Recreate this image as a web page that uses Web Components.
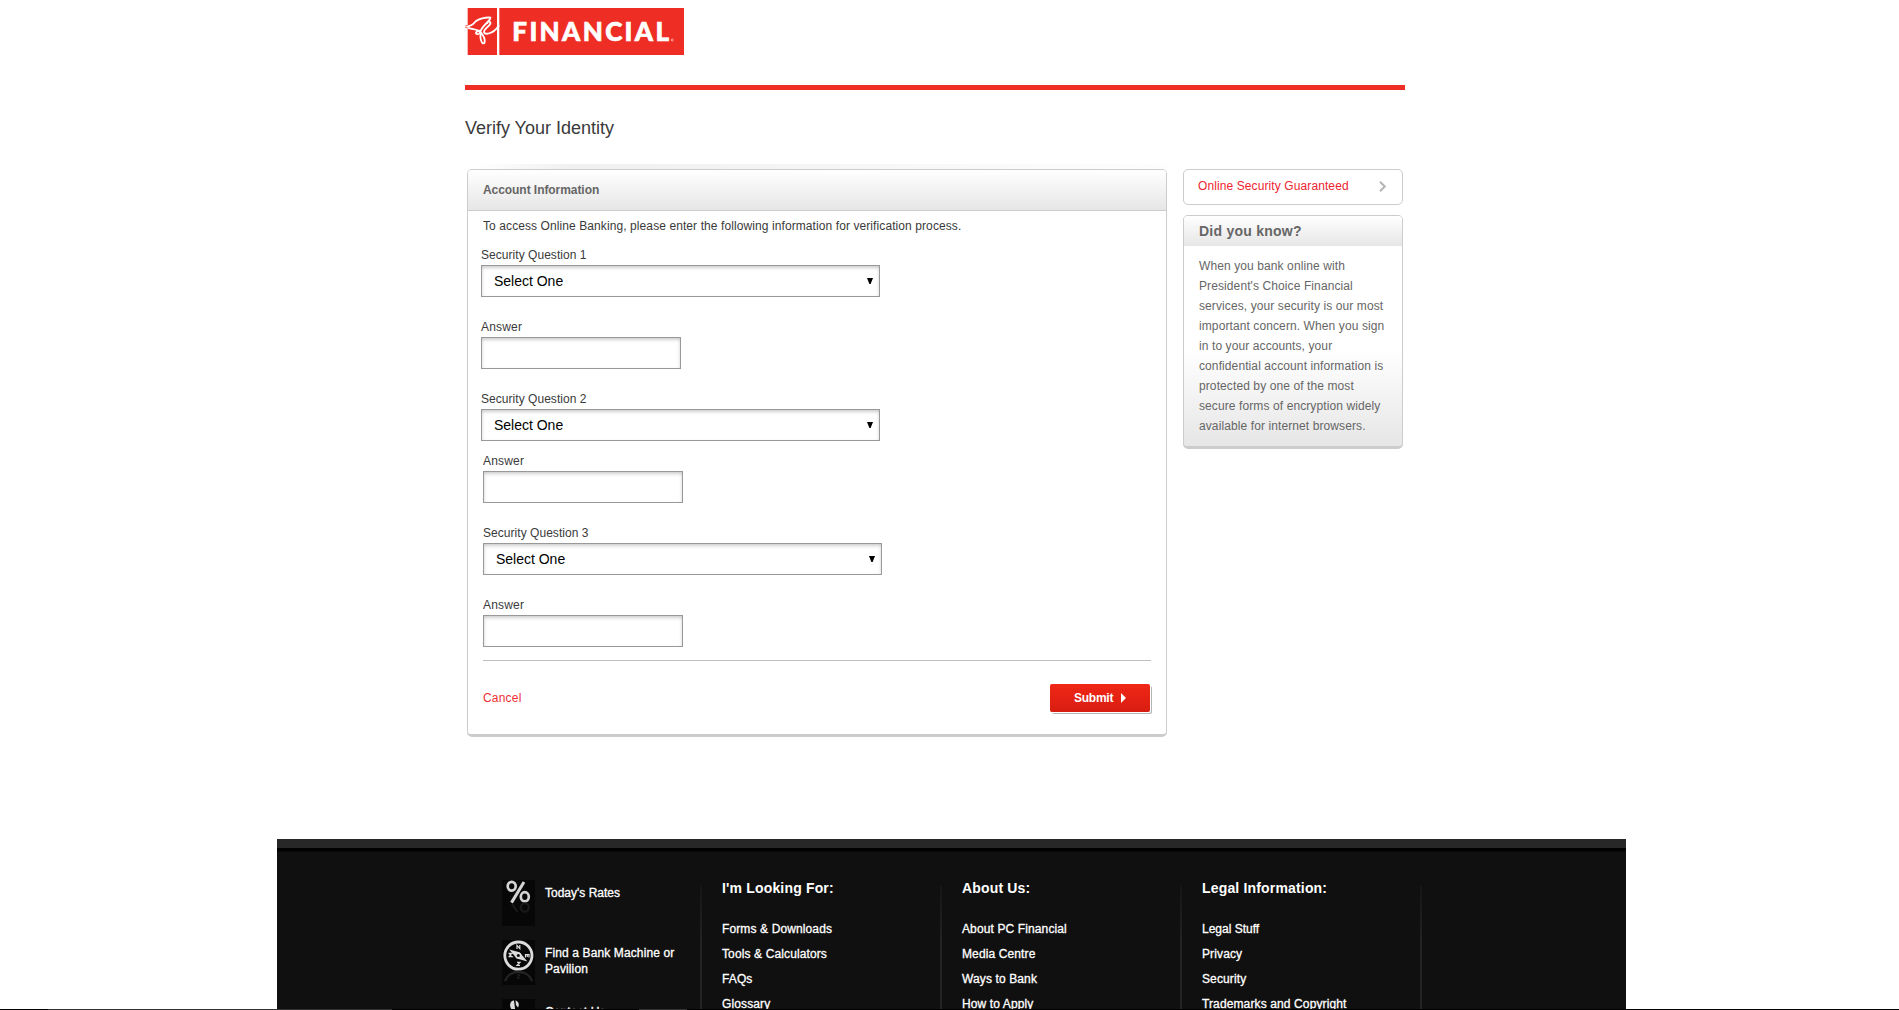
<!DOCTYPE html>
<html lang="en">
<head>
<meta charset="utf-8">
<title>Verify Your Identity</title>
<style>
html,body{margin:0;height:1010px;overflow:hidden;background:#fff}
body{font:12px/14px "Liberation Sans",Arial,sans-serif;color:#3a3a3a;letter-spacing:.1px}
</style>
</head>
<body>
<bank-page></bank-page>
<script>
function define(name, html) {
  const t = document.createElement('template');
  t.innerHTML = html;
  customElements.define(name, class extends HTMLElement {
    constructor() {
      super();
      this.attachShadow({ mode: 'open' }).appendChild(t.content.cloneNode(true));
    }
  });
}

define('brand-header', `
<style>
:host{display:block;padding-top:8px;border-bottom:5px solid #ee2e24;height:77px}
svg{display:block}
text{font:900 78px Lato,sans-serif;letter-spacing:0}
</style>
<svg width="220" height="47" viewBox="30 24 660 141">
  <rect x="38" y="24" width="88" height="141" fill="#ee2e24"/>
  <rect x="133" y="24" width="554" height="141" fill="#ee2e24"/>
  <g fill="none" stroke="#fff" stroke-width="5.5" stroke-linecap="round" stroke-linejoin="round">
    <path d="M106 53C94 51 68 57 60 66C54 74 42 79 33 80C42 87 58 87 68 91C77 95 83 103 87 112C91 123 89 132 84 130C78 127 75 113 77 101"/>
    <path d="M106 53C108 62 86 72 77 92C75 100 71 104 65 102C60 99 65 93 73 92"/>
    <path d="M97 69C99 60 109 65 105 73C98 82 86 88 87 97C91 107 117 99 131 77"/>
  </g>
  <path d="M31 78L38 76M31 82L38 84" stroke="#ee2e24" stroke-width="2.5"/>
  <text x="172" y="124" textLength="470" fill="#fff" stroke="#fff" stroke-width="2">FINANCIAL</text>
  <circle cx="652" cy="120" r="3" fill="none" stroke="#fff" stroke-width="1.6"/>
</svg>`);

define('info-card', `
<style>
:host{display:block;box-sizing:border-box;border:1px solid #ccc;border-bottom:3px solid #ccc;border-radius:5px;overflow:hidden;background:#fff}
header{box-sizing:border-box;height:41px;padding:13px 15px 0;border-bottom:1px solid #ccc;background:linear-gradient(#fff,#e6e6e6);font-weight:bold;color:#666;letter-spacing:-.06px}
:host([side]){background:linear-gradient(#fff 58%,#e6e6e6)}
:host([side]) header{border:0;height:30px;padding:7px 15px 0;font-size:14px;line-height:16px;letter-spacing:.24px}
</style>
<header><slot name="title"></slot></header><slot></slot>`);

customElements.define('form-field', class extends HTMLElement {
  constructor() {
    super();
    const sel = this.getAttribute('type') === 'select';
    this.attachShadow({ mode: 'open' }).innerHTML = `
<style>
:host{display:flex;flex-direction:column;gap:3px;margin-top:23px}
.box{box-sizing:border-box;width:200px;height:32px;border:1px solid #999;background:#fff;box-shadow:inset 0 2px 4px -1px rgba(0,0,0,.28);display:flex;align-items:center;justify-content:space-between;font-size:14px;line-height:30px;color:#000;letter-spacing:-.01px}
.select{width:399px;padding:0 6px 0 12px}
label{letter-spacing:${sel ? '.04px' : '.18px'}}
</style>
<label><slot></slot></label>` + (sel
      ? `<div class="box select" role="combobox"><span>Select One</span><svg width="6" height="6"><path d="M0 0H6L3.6 6H2.4Z"/></svg></div>`
      : `<div class="box" role="textbox"></div>`);
  }
});

define('submit-button', `
<style>
:host{display:flex;align-items:center;box-sizing:border-box;width:100px;height:28px;padding-left:24px;gap:8px;border-radius:2px;background:linear-gradient(#f02717,#d81d10);box-shadow:1px 1px 0 #fff,2px 2px 0 #b4b4b4;color:#fff;font-weight:bold;letter-spacing:-.25px;margin-right:1px}
</style>
<slot></slot><svg width="5" height="10"><path d="M0 0L5 5L0 10Z" fill="#fff"/></svg>`);

define('verify-form', `
<style>
:host{display:block}
.glow{height:5px;background:linear-gradient(90deg,#fff 1%,#f0f0f0 15%,#f2f2f2 30%,#fafafa 75%,#fdfdfd)}
info-card{height:568px}
.body{padding:8px 15px 0}
.intro{letter-spacing:.09px}
.near{margin-left:-2px}
.actions{display:flex;justify-content:space-between;align-items:center;margin-top:13px;padding-top:23px;border-top:1px solid #bfbfbf}
a{color:#ee2e34;letter-spacing:.2px}
</style>
<div class="glow"></div>
<info-card><span slot="title">Account Information</span>
<div class="body">
  <div class="intro">To access Online Banking, please enter the following information for verification process.</div>
  <form-field class="near" style="margin-top:15px" type="select">Security Question 1</form-field>
  <form-field class="near">Answer</form-field>
  <form-field class="near" type="select">Security Question 2</form-field>
  <form-field style="margin-top:13px">Answer</form-field>
  <form-field type="select">Security Question 3</form-field>
  <form-field>Answer</form-field>
  <div class="actions"><a>Cancel</a><submit-button>Submit</submit-button></div>
</div></info-card>`);

define('side-bar', `
<style>
:host{display:flex;flex-direction:column;gap:10px;width:220px;padding-top:5px}
.link{display:flex;justify-content:space-between;align-items:flex-start;box-sizing:border-box;height:36px;border:1px solid #ccc;border-radius:5px;padding:9px 16px 0 14px;color:#ee2430}
.link svg{margin-top:2px}
p{margin:0;padding:10px 0 10px 15px;line-height:20px;color:#666;white-space:nowrap}
</style>
<div class="link"><a>Online Security Guaranteed</a><svg width="7" height="11"><path d="M1 .7L5.8 5.5L1 10.3" fill="none" stroke="#b5b5b5" stroke-width="2"/></svg></div>
<info-card side><span slot="title">Did you know?</span>
<p>When you bank online with<br>President's Choice Financial<br>services, your security is our most<br>important concern. When you sign<br>in to your accounts, your<br>confidential account information is<br>protected by one of the most<br>secure forms of encryption widely<br>available for internet browsers.</p></info-card>`);

define('quick-link', `
<style>
:host{display:flex;gap:10px;height:60px;line-height:16px}
::slotted(svg){flex:none;background:#070707}
.t{width:140px;padding-top:5px;-webkit-text-stroke:.3px #fff}
</style>
<slot name="icon"></slot><div class="t"><slot></slot></div>`);

define('link-column', `
<style>
:host{display:flex;flex-direction:column;gap:11px;box-sizing:border-box;width:240px;padding-left:22px;background:linear-gradient(#161616,#242424 60px,#242424) no-repeat 0 6px/2px 100%}
h3{margin:0 0 15px;font-size:14px;line-height:16px;letter-spacing:.17px}
::slotted(a){-webkit-text-stroke:.3px #fff}
</style>
<h3><slot name="title"></slot></h3><slot></slot>`);

define('site-footer', `
<style>
:host{display:block;width:1349px;height:171px;margin-left:277px;overflow:hidden;background:#101010;color:#fff;letter-spacing:.12px}
.top{height:9px;background:#272727}
.line{height:4px;background:linear-gradient(#000 50%,#0c0c0c)}
.cols{display:flex;height:140px;padding:28px 0 0 225px}
.quick{width:198px}
.end{width:2px;background:linear-gradient(#161616,#242424 60px) no-repeat 0 6px}
</style>
<div class="top"></div><div class="line"></div>
<div class="cols">
 <div class="quick">
  <quick-link style="letter-spacing:0"><svg slot="icon" width="33" height="46">
    <g fill="none" stroke="#d4d4d4" stroke-width="2.7"><ellipse cx="9.7" cy="6.3" rx="4" ry="4.4"/><ellipse cx="22.8" cy="16.8" rx="4" ry="4.6"/><path d="M22 2L9.5 22.6" stroke-width="3"/></g>
    <g fill="none" stroke="#191919" stroke-width="2.2"><ellipse cx="22.8" cy="27.5" rx="4" ry="4.2"/><path d="M10 24L15.5 32"/></g></svg>Today's Rates</quick-link>
  <quick-link style="height:59px"><svg slot="icon" width="33" height="45">
    <circle cx="16.4" cy="15.6" r="13.6" fill="none" stroke="#dcdcdc" stroke-width="2.8"/>
    <path d="M7.2 9.5L17.5 12.2L25.4 21.6L14.8 18.4Z" fill="#dcdcdc"/><circle cx="16.3" cy="15.5" r="3.1" fill="#dcdcdc"/><circle cx="16.3" cy="15.5" r="1.6" fill="#111"/>
    <g fill="none" stroke="#dcdcdc" stroke-width="1.2"><path d="M15 9V5.4L17.8 8.6V5"/><path d="M15 22.4H18L15 25.4H18"/><path d="M27 17.5V14.6H23.5V17.5M25.3 14.6V17"/><path d="M6.5 13.4H10L7.6 15L10 16.7H6.5"/></g>
    <path d="M3 41C7 29 26 29 30 41" fill="none" stroke="#232323" stroke-width="2.4"/><path d="M15 35H18L15 38H18" fill="none" stroke="#222"/></svg>Find a Bank Machine or Pavilion</quick-link>
  <quick-link><svg slot="icon" width="33" height="45"><path d="M10 11C6 6 9 1 12 1.4L13.2 11Z" fill="#dcdcdc"/><path d="M13.5 1.3C17 3 17.5 6 16 8.5L14 6Z" fill="#dcdcdc"/></svg>Contact Us</quick-link>
 </div>
 <link-column><span slot="title">I'm Looking For:</span><a>Forms &amp; Downloads</a><a>Tools &amp; Calculators</a><a>FAQs</a><a>Glossary</a></link-column>
 <link-column><span slot="title">About Us:</span><a>About PC Financial</a><a>Media Centre</a><a>Ways to Bank</a><a>How to Apply</a></link-column>
 <link-column><span slot="title">Legal Information:</span><a style="letter-spacing:0">Legal Stuff</a><a>Privacy</a><a>Security</a><a>Trademarks and Copyright</a></link-column>
 <div class="end"></div>
</div>`);

define('bank-page', `
<style>
:host{display:flex;flex-direction:column;height:1010px;position:relative}
main{width:940px;margin-left:465px;height:839px}
h1{margin:28px 0 26px;font-weight:normal;font-size:18px;line-height:20px;letter-spacing:-.01px}
.row{display:flex;gap:16px;padding-left:2px}
verify-form{width:700px}
.edge{position:absolute;left:0;right:0;bottom:0;height:1px;background:linear-gradient(90deg,#000 48px,#333 48px 392px,#000 392px 639px,#333 639px 687px,#000 687px)}
</style>
<main>
<brand-header></brand-header>
<h1>Verify Your Identity</h1>
<div class="row"><verify-form></verify-form><side-bar></side-bar></div>
</main>
<site-footer></site-footer>
<div class="edge"></div>`);
</script>
</body>
</html>
